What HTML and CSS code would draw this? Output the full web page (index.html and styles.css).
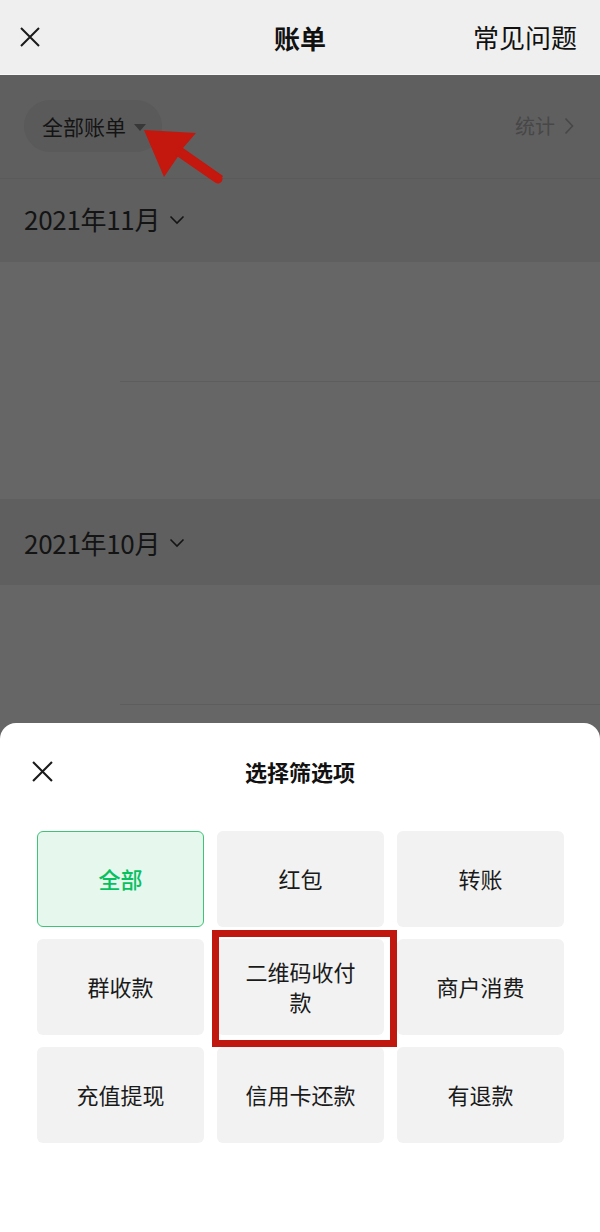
FILE: index.html
```html
<!DOCTYPE html>
<html lang="zh">
<head>
<meta charset="utf-8">
<link rel="stylesheet" href="styles.css">
</head>
<body>
<div class="screen">
  <header class="topbar">
    <svg class="icon-close" viewBox="0 0 20 20"><path d="M1 1L19 19M19 1L1 19" stroke="#1a1a1a" stroke-width="2" fill="none"/></svg>
    <div class="title">账单</div>
    <div class="faq">常见问题</div>
  </header>
  <main class="dim">
    <section class="filterbar">
      <div class="pill">全部账单<span class="tri"></span></div>
      <div class="stat">统计<svg class="chev-r" viewBox="0 0 10 18"><path d="M1.5 1.5L8.5 9L1.5 16.5" stroke="#474747" stroke-width="1.6" fill="none"/></svg></div>
    </section>
    <div class="month">2021年11月<svg class="chev-d" viewBox="0 0 16 10"><path d="M1.5 1.5L8 8L14.5 1.5" stroke="#141414" stroke-width="1.6" fill="none"/></svg></div>
    <div class="list">
      <div class="row"></div>
      <div class="row last"></div>
    </div>
    <div class="month m2">2021年10月<svg class="chev-d" viewBox="0 0 16 10"><path d="M1.5 1.5L8 8L14.5 1.5" stroke="#141414" stroke-width="1.6" fill="none"/></svg></div>
    <div class="list">
      <div class="row"></div>
      <div class="row last"></div>
    </div>
  </main>

  <svg class="arrow" width="100" height="70" viewBox="0 0 100 70">
    <polygon points="3,0 55,3 42,18 82,46 78,53 38,25 23,47" fill="#c4170d"/>
    <line x1="38" y1="22" x2="77" y2="49" stroke="#c4170d" stroke-width="9" stroke-linecap="round"/>
  </svg>

  <div class="sheet">
    <div class="sheet-head">
      <svg class="icon-close sheet-close" viewBox="0 0 20 20"><path d="M1 1L19 19M19 1L1 19" stroke="#1a1a1a" stroke-width="2" fill="none"/></svg>
      <div class="sheet-title">选择筛选项</div>
    </div>
    <div class="grid">
      <div class="cell selected">全部</div>
      <div class="cell">红包</div>
      <div class="cell">转账</div>
      <div class="cell">群收款</div>
      <div class="cell marked">二维码收付款<span class="highlight"></span></div>
      <div class="cell">商户消费</div>
      <div class="cell">充值提现</div>
      <div class="cell">信用卡还款</div>
      <div class="cell">有退款</div>
    </div>
  </div>
</div>
</body>
</html>
```

FILE: styles.css
```css
* { box-sizing: border-box; }
html, body { margin: 0; padding: 0; }
body {
  font-family: "Noto Sans CJK SC", "Noto Sans", sans-serif;
  background: #666666;
}
.screen {
  position: relative;
  width: 600px;
  height: 1232px;
  overflow: hidden;
  background: #666666;
}
.topbar {
  height: 75px;
  background: #efefef;
  border-bottom: 1px solid #f8f8f8;
  display: flex;
  align-items: center;
  justify-content: space-between;
  padding: 0 23px 0 20px;
  position: relative;
}
.icon-close { width: 20px; height: 20px; display: block; }
.title {
  position: absolute;
  left: 0; right: 0; top: 0; bottom: 0;
  display: flex;
  align-items: center;
  justify-content: center;
  font-size: 26px;
  font-weight: 700;
  color: #111;
  pointer-events: none;
}
.faq { font-size: 26px; color: #111; line-height: 36px; }

.dim { background: #666666; }
.filterbar {
  height: 104px;
  background: #5f5f5f;
  border-bottom: 1px solid #5a5a5a;
  display: flex;
  align-items: center;
  justify-content: space-between;
  padding: 0 26px 2px 24px;
}
.pill {
  height: 52px;
  border-radius: 26px;
  background: #5a5a5a;
  padding: 0 16px 0 18px;
  display: flex;
  align-items: center;
  font-size: 21px;
  color: #141414;
  width: 138px;
}
.tri {
  width: 0; height: 0;
  border-left: 6px solid transparent;
  border-right: 6px solid transparent;
  border-top: 7px solid #383838;
  margin-left: 8px;
  margin-top: 3px;
}
.stat {
  display: flex;
  align-items: center;
  font-size: 20px;
  color: #474747;
}
.chev-r { width: 10px; height: 18px; margin-left: 9px; }

.month {
  height: 83px;
  background: #5f5f5f;
  display: flex;
  align-items: center;
  padding: 0 0 4px 24px;
  font-size: 26px;
  color: #141414;
  letter-spacing: -0.3px;
}
.month.m2 { height: 86px; padding-bottom: 0; }
.chev-d { width: 16px; height: 10px; margin-left: 9px; margin-top: 2px; }
.list { background: #666666; }
.row {
  height: 120px;
  margin-left: 120px;
  border-bottom: 1px solid #5d5d5d;
}
.row.last { height: 117px; border-bottom: none; }

.arrow {
  position: absolute;
  left: 141px;
  top: 130px;
}

.sheet {
  position: absolute;
  left: 0; right: 0;
  top: 723px;
  bottom: 0;
  background: #ffffff;
  border-radius: 16px 16px 0 0;
}
.sheet-head {
  height: 96px;
  display: flex;
  align-items: center;
  position: relative;
  padding-left: 32px;
}
.sheet-close { width: 21px; height: 21px; }
.sheet-title {
  position: absolute;
  left: 0; right: 0; top: 0; bottom: 0;
  display: flex;
  align-items: center;
  justify-content: center;
  font-size: 22px;
  font-weight: 700;
  color: #111;
}
.grid {
  margin-top: 12px;
  padding: 0 36px 0 37px;
  display: grid;
  grid-template-columns: repeat(3, 167px);
  grid-auto-rows: 96px;
  column-gap: 13px;
  row-gap: 12px;
}
.cell {
  position: relative;
  background: #f2f2f2;
  border-radius: 6px;
  display: flex;
  align-items: center;
  justify-content: center;
  text-align: center;
  padding: 0 26px 3px;
  font-size: 22px;
  line-height: 30px;
  color: #1a1a1a;
}
.cell.selected {
  background: #e6f8ee;
  border: 1.5px solid #3ec476;
  color: #07c160;
  font-weight: 500;
}
.highlight {
  position: absolute;
  left: -5px;
  top: -9px;
  width: 185px;
  height: 117px;
  border: 7px solid #c0170f;
}
```
